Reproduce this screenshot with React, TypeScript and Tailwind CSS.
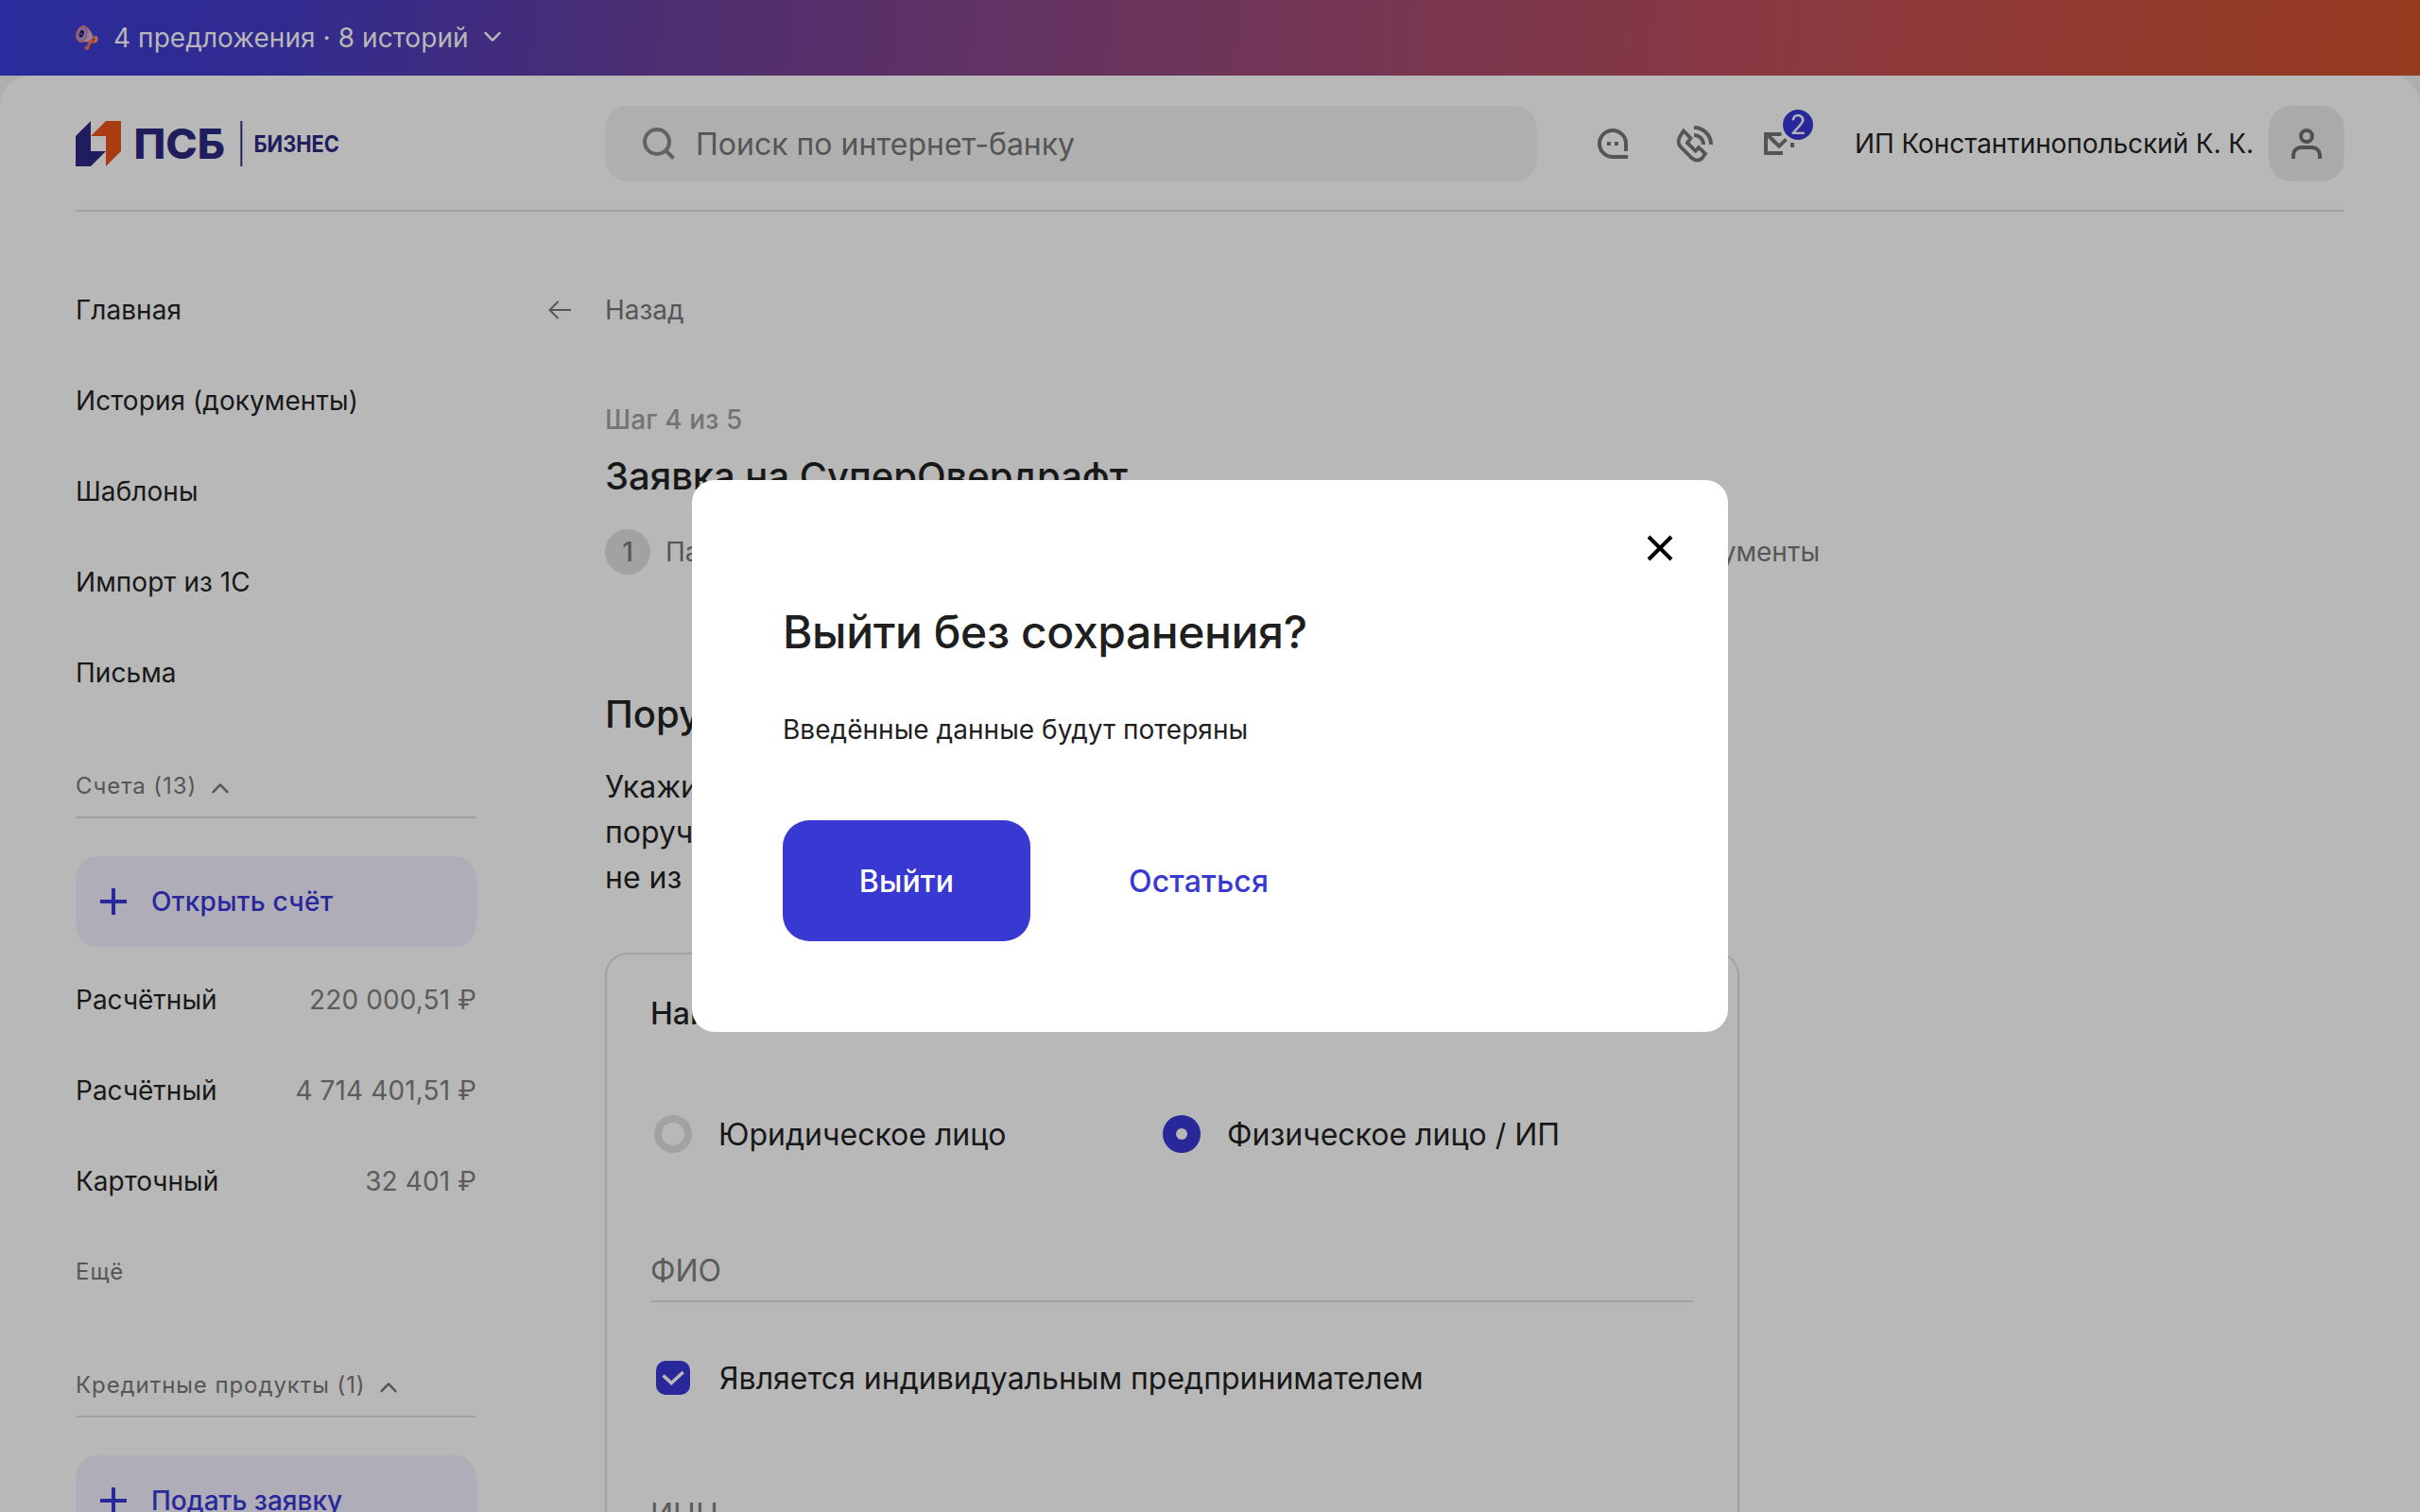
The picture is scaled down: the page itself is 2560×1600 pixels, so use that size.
import type { ReactNode } from "react";

function ChevronUp({ className = "" }: { className?: string }) {
  return (
    <svg viewBox="0 0 20 12" fill="none" stroke="currentColor" strokeWidth="2.4" strokeLinecap="round" strokeLinejoin="round" className={`h-3 w-5 ${className}`}>
      <path d="M2.5 10.2 10 2.4l7.5 7.8" />
    </svg>
  );
}

function Megaphone() {
  return (
    <svg viewBox="0 0 24 26" className="h-[26px] w-6">
      <path d="M14.500 16 18.500 17 15.500 20.500 14 24.500a2 2 0 0 1-2.600 1.200l-1.200-.5a1.500 1.500 0 0 1-.7-2.200l2.500-2z" fill="#b0503f" />
      <path d="M14 10.500 20 11.200a4 4 0 0 1-.4 7.600L12 18z" fill="#b0503f" />
      <path d="M20.500 10.800a3.600 3.600 0 0 1 3 4.200 3.800 3.800 0 0 1-3 3.500z" fill="#b07060" />
      <circle cx="19" cy="15" r="1.200" fill="#7d3428" />
      <path d="M11.500 1.500C15 4 17.500 7.500 18 11c0 3-3.500 5.500-6.500 6.200L5 17.500z" fill="#9182ad" />
      <ellipse cx="7" cy="8.900" rx="5.700" ry="8.400" transform="rotate(18 7 8.900)" fill="#6d5d9a" stroke="#b8604f" strokeWidth="1.500" />
      <ellipse cx="6.800" cy="9" rx="4" ry="6.400" transform="rotate(18 6.800 9)" fill="#8274a8" />
      <ellipse cx="6.300" cy="8.700" rx="2.500" ry="4.200" transform="rotate(18 6.300 8.700)" fill="#251a47" />
      <circle cx="6.300" cy="9" r="1.100" fill="#6b4c80" />
    </svg>
  );
}

function Logo() {
  return (
    <svg viewBox="0 0 280 48" className="h-12 w-[280px] shrink-0 overflow-visible">
      <path d="M0 16 16 0V32H32L16 48H0z" fill="#1f1d5d" />
      <path d="M32 0H48V32L32 48V16H16z" fill="#a93d11" />
      <text x="61.500" y="40" textLength="96.500" lengthAdjust="spacingAndGlyphs" fontFamily="Inter" fontWeight="800" fontSize="44" fill="#1f1d5d">ПСБ</text>
      <rect x="174.400" y="0" width="1.900" height="48" fill="#1f1d5d" />
      <text x="188.500" y="32.600" textLength="90.500" lengthAdjust="spacingAndGlyphs" fontFamily="Inter" fontWeight="700" fontSize="24" fill="#1f1d5d">БИЗНЕС</text>
    </svg>
  );
}

function HeaderIcons() {
  return (
    <div className="flex items-center text-[#555555]">
      <svg viewBox="0 0 32 32" fill="none" stroke="currentColor" strokeWidth="4" className="ml-16 size-8">
        <path d="M30 24V16A14 14 0 1 0 16 30H32" />
        <path d="M10 16h4M18 16h4" />
      </svg>
      <svg viewBox="0 0 42 42" fill="none" stroke="currentColor" strokeWidth="4" className="ml-[50px] size-[42px]">
        <path d="M20 4A18 18 0 0 1 38 22M20 12A10 10 0 0 1 30 22" />
        <path d="M9 7.500 16.500 15.200 13 20.200 21.700 28.800 25 25 32 31.800 28.500 36.500C25 39.800 20.500 38.600 18 36.500L6 24.700C3 21.500 3 16.500 5.800 12.200Z" strokeWidth="3.800" />
      </svg>
      <div className="relative ml-[52px] h-6 w-8">
        <svg viewBox="0 0 32 24" fill="none" stroke="currentColor" strokeWidth="4" className="h-6 w-8">
          <path d="M18.500 2H2V22H20M3.500 2.500 16 14.800 23.500 7.300M30 11V16" />
        </svg>
        <span className="absolute -top-6 left-5 flex size-8 items-center justify-center rounded-full bg-[#28289b] text-[28px] leading-8 text-[#b8b8b8]">2</span>
      </div>
    </div>
  );
}

function SectionHeading({ children }: { children: ReactNode }) {
  return (
    <div className="flex h-[66px] items-center border-b-2 border-[#a2a2a2] text-[24px] leading-8 tracking-[0.92px] text-[#565656]">
      <span>{children}</span>
      <ChevronUp className="ml-[15px] mt-1" />
    </div>
  );
}

function AddButton({ children }: { children: ReactNode }) {
  return (
    <div className="mt-10 flex h-24 shrink-0 items-center rounded-[24px] bg-[#afadb8] pl-[26px] text-[28px] font-medium text-[#28289b]">
      <svg viewBox="0 0 28 28" stroke="currentColor" strokeWidth="4" className="mr-[26px] size-7">
        <path d="M14 0v28M0 14h28" />
      </svg>
      {children}
    </div>
  );
}

const nav = ["Главная", "История (документы)", "Шаблоны", "Импорт из 1С", "Письма"];
const accounts = [
  ["Расчётный", "220 000,51 ₽"],
  ["Расчётный", "4 714 401,51 ₽"],
  ["Карточный", "32 401 ₽"],
];

function Sidebar() {
  return (
    <aside className="flex w-[424px] shrink-0 flex-col text-[28px] leading-10">
      {nav.map((item) => (
        <div key={item} className="flex h-24 items-center tracking-[0.06px]">{item}</div>
      ))}
      <div className="mt-[40px]">
        <SectionHeading>Счета (13)</SectionHeading>
      </div>
      <AddButton><span className="tracking-[0.25px]">Открыть счёт</span></AddButton>
      <div className="mt-2">
        {accounts.map(([name, sum]) => (
          <div key={sum} className="flex h-24 items-center justify-between">
            <span>{name}</span>
            <span className="tracking-[0.12px] text-[#5c5c5c]">{sum}</span>
          </div>
        ))}
      </div>
      <div className="flex h-24 items-center text-[24px] tracking-[1px] text-[#565656]">Ещё</div>
      <div className="mt-[40px]">
        <SectionHeading>Кредитные продукты (1)</SectionHeading>
      </div>
      <AddButton>Подать заявку</AddButton>
    </aside>
  );
}

function FormCard() {
  return (
    <section className="mt-[55px] flex h-[800px] w-[1200px] flex-col rounded-[24px] border-2 border-[#a2a2a2] px-[46px] text-[32px] leading-10">
      <h3 className="mt-[43px] font-medium">Найдите поручителя</h3>
      <div className="mt-[87px] flex h-10 items-center">
        <div className="flex w-[538px] items-center">
          <span className="ml-1 mr-7 size-10 rounded-full border-8 border-[#a2a2a2]" />
          <span className="pt-0.5">Юридическое лицо</span>
        </div>
        <div className="flex items-center">
          <span className="ml-1 mr-7 flex size-10 items-center justify-center rounded-full bg-[#28289b]">
            <span className="size-3 rounded-full bg-[#b8b8b8]" />
          </span>
          <span className="pt-0.5">Физическое лицо / ИП</span>
        </div>
      </div>
      <div className="mt-[105px] h-[53px] border-b-2 border-[#a2a2a2] text-[#5c5c5c]">ФИО</div>
      <div className="mt-15 flex h-10 items-center">
        <span className="ml-1.5 mr-[30px] flex size-9 items-center justify-center rounded-[10px] bg-[#28289b]">
          <svg viewBox="0 0 36 36" fill="none" stroke="#b8b8b8" strokeWidth="3.600" className="size-9">
            <path d="m7.500 15.500 8.700 8 12.500-11.500" />
          </svg>
        </span>
        <span className="pl-px pt-px">Является индивидуальным предпринимателем</span>
      </div>
      <div className="mt-[105px] text-[#5c5c5c]">ИНН</div>
    </section>
  );
}

function Content() {
  return (
    <main className="ml-[76px] flex flex-col">
      <div className="mt-7 flex items-center text-[28px] leading-10 text-[#565656]">
        <svg viewBox="0 0 24 20" fill="none" stroke="currentColor" strokeWidth="2" className="h-5 w-6">
          <path d="M24 10H1.500M10.500 1 1.500 10l9 9" />
        </svg>
        <span className="ml-9">Назад</span>
      </div>
      <div className="ml-15 flex flex-col">
        <p className="mt-[76px] text-[28px] font-medium leading-10 tracking-[0.1px] text-[#747474]">Шаг 4 из 5</p>
        <h1 className="mt-4 text-[40px] font-medium leading-12 tracking-[-0.04px]">Заявка на СуперОвердрафт</h1>
        <div className="mt-8 flex w-[1285px] items-center justify-between text-[28px] leading-10 text-[#565656]">
          <div className="flex items-center">
            <span className="mr-4 flex size-12 items-center justify-center rounded-full bg-[#a2a2a2] font-medium">1</span>
            Параметры
          </div>
          <span>Документы</span>
        </div>
        <h2 className="mt-[124px] text-[40px] font-medium leading-12">Поручители</h2>
        <p className="mt-[29px] text-[32px] leading-12">
          Укажите
          <br />
          поручителя
          <br />
          не из
        </p>
        <FormCard />
      </div>
    </main>
  );
}

function ExitDialog() {
  return (
    <div className="absolute inset-0 flex items-center justify-center">
      <div role="dialog" className="relative flex h-[584px] w-[1096px] flex-col rounded-[24px] bg-white px-24 pt-[129px] text-[#1f1f1f]">
        <svg viewBox="0 0 28 28" stroke="#000000" strokeWidth="4" className="absolute right-[58px] top-[58px] size-7">
          <path d="M2 2 26 26M26 2 2 26" />
        </svg>
        <h2 className="text-[48px] font-medium leading-16 tracking-[-0.4px]">Выйти без сохранения?</h2>
        <p className="mt-[51px] text-[28px] leading-10 tracking-[0.03px]">Введённые данные будут потеряны</p>
        <div className="mt-[76px] flex h-32 items-center text-[32px] font-medium">
          <button className="h-32 w-[262px] rounded-[28px] bg-[#3838d2] pt-0.5 tracking-[0.2px] text-white">Выйти</button>
          <button className="ml-[104px] pt-0.5 tracking-[0.15px] text-[#3838d2]">Остаться</button>
        </div>
      </div>
    </div>
  );
}

export default function App() {
  return (
    <div className="relative h-[1600px] w-[2560px] overflow-hidden bg-[#adafae] font-['Inter',sans-serif] text-[#181818]">
      <div className="flex h-20 items-center bg-[linear-gradient(96deg,#2a2b9d_0%,#322b8f_12%,#482d74_25%,#5d3166_38%,#6e3559_50%,#7d374c_62%,#8a3840_74%,#91392f_86%,#963a1f_100%)] pl-20 text-[28px] leading-10 text-[#b8b8b8]">
        <Megaphone />
        <span className="ml-4 tracking-[0.07px]">4 предложения · 8 историй</span>
        <ChevronUp className="mb-[3px] ml-[15px] rotate-180" />
      </div>
      <div className="flex h-[1520px] flex-col overflow-hidden rounded-t-[32px] bg-[#b8b8b8] px-20">
        <header className="flex h-36 shrink-0 items-center border-b-2 border-[#a2a2a2] pt-0.5">
          <Logo />
          <div className="ml-[280px] flex h-20 w-[986px] items-center rounded-[24px] bg-[#afafaf] pl-10 text-[32px] text-[#555555]">
            <svg viewBox="0 0 34 34" fill="none" stroke="#626262" strokeWidth="4" className="mr-[22px] size-[34px]">
              <circle cx="15" cy="15" r="13" />
              <path d="m24 24 8.500 8.500" />
            </svg>
            <span className="pt-0.5">Поиск по интернет-банку</span>
          </div>
          <HeaderIcons />
          <div className="ml-auto text-[28px] tracking-[-0.08px]">ИП Константинопольский К. К.</div>
          <div className="ml-4 flex size-20 items-center justify-center rounded-[24px] bg-[#aaaaaa] text-[#505050]">
            <svg viewBox="0 0 32 32" fill="none" stroke="currentColor" strokeWidth="4" className="size-8">
              <circle cx="16" cy="8" r="6" />
              <path d="M2 32V28A8 8 0 0 1 10 20H22A8 8 0 0 1 30 28V32" />
            </svg>
          </div>
        </header>
        <div className="flex pt-14">
          <Sidebar />
          <Content />
        </div>
      </div>
      <ExitDialog />
    </div>
  );
}
